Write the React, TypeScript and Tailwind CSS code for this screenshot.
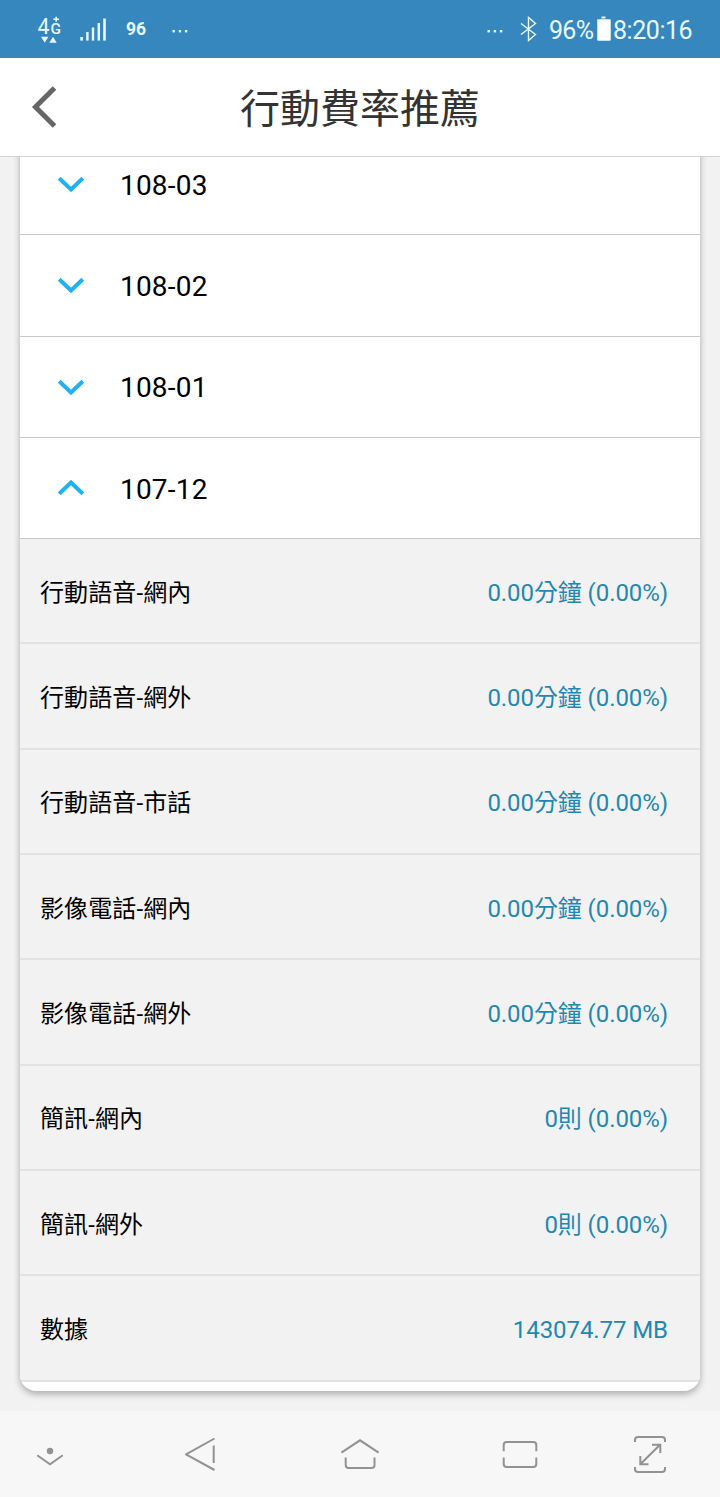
import React from 'react';

const months = [
  { label: '108-03', open: false },
  { label: '108-02', open: false },
  { label: '108-01', open: false },
  { label: '107-12', open: true },
];

const usage = [
  ['行動語音-網內', '0.00分鐘 (0.00%)'],
  ['行動語音-網外', '0.00分鐘 (0.00%)'],
  ['行動語音-市話', '0.00分鐘 (0.00%)'],
  ['影像電話-網內', '0.00分鐘 (0.00%)'],
  ['影像電話-網外', '0.00分鐘 (0.00%)'],
  ['簡訊-網內', '0則 (0.00%)'],
  ['簡訊-網外', '0則 (0.00%)'],
  ['數據', '143074.77 MB'],
];

function Dots() {
  return (
    <svg width="16" height="4" viewBox="0 0 16 4" fill="#e8faff">
      <rect x="0.5" y="1" width="2.4" height="2.4" />
      <rect x="6.7" y="1" width="2.4" height="2.4" />
      <rect x="12.9" y="1" width="2.4" height="2.4" />
    </svg>
  );
}

function NetworkIcon() {
  return (
    <svg width="26" height="30" viewBox="0 0 26 30" fill="#e8faff" className="font-[Roboto,sans-serif]">
      <text x="0.5" y="19.7" fontSize="22" textLength="12" lengthAdjust="spacingAndGlyphs">4</text>
      <text x="13.5" y="19.9" fontSize="15" fontWeight="500" textLength="10.5" lengthAdjust="spacingAndGlyphs">G</text>
      <path d="M19.2 2.7v5M16.4 5.2h5.6" stroke="#e8faff" strokeWidth="1.6" />
      <path d="M4 22.8h7.4l-3.7 6zM12.3 28.8h7.4l-3.7-6z" />
    </svg>
  );
}

function Signal() {
  return (
    <svg width="27" height="23" viewBox="0 0 27 23" fill="#e8faff">
      <rect x="0.3" y="19" width="2.6" height="3.6" />
      <rect x="6.2" y="14" width="2.4" height="8.6" />
      <rect x="11.8" y="9.5" width="2.4" height="13.1" />
      <rect x="17.6" y="5" width="2.4" height="17.6" />
      <rect x="23.2" y="0.5" width="2.6" height="22.1" />
    </svg>
  );
}

function StatusBar() {
  return (
    <div className="flex h-[58px] shrink-0 items-center bg-[#3787bf] pl-[37px] pr-[28px] text-[#e8faff]">
      <NetworkIcon />
      <div className="ml-[17px]"><Signal /></div>
      <span className="ml-[19px] mt-[2px] w-[21px] text-[17.5px] font-bold leading-none">96</span>
      <div className="mt-[3px] ml-[25px] flex"><Dots /></div>
      <div className="ml-auto mt-[3px] flex"><Dots /></div>
      <svg className="ml-[17px]" width="17" height="26" viewBox="0 0 17 26" fill="none" stroke="#e8faff" strokeWidth="1.4">
        <path d="M1 7.5 15.5 18.5 8.5 24.5V1.5L15.5 7.5 1 18.5" />
      </svg>
      <span className="ml-[12px] mt-[3px] w-[45px] whitespace-nowrap text-[25px] leading-none tracking-[-0.7px]">96%</span>
      <svg className="mb-px ml-[2px]" width="16" height="26" viewBox="0 0 16 26">
        <rect x="5.5" y="0.5" width="4" height="2" fill="#e8faff" />
        <rect x="1" y="3" width="14" height="22" rx="1.4" fill="#c5dff0" />
        <rect x="2" y="4" width="12" height="20" fill="#fff" />
      </svg>
      <span className="ml-px mt-[3px] w-[79px] whitespace-nowrap text-[25px] leading-none tracking-[-0.45px]">8:20:16</span>
    </div>
  );
}

function Chevron({ open }: { open: boolean }) {
  return (
    <svg width="30" height="20" viewBox="0 0 30 20" fill="none" stroke="#1eb2f2" strokeWidth="4">
      <path d={open ? 'M3.2 15.7 15 4.5 26.8 15.7' : 'M3.2 4.3 15 15.5 26.8 4.3'} />
    </svg>
  );
}

function NavBar() {
  return (
    <nav className="flex h-[86px] shrink-0 items-center bg-[#f7f7f7] text-[#929292]">
      <div className="flex w-[100px] justify-center">
        <svg width="40" height="40" viewBox="0 0 40 40" fill="none" stroke="currentColor" strokeWidth="2">
          <circle cx="20" cy="17" r="3.2" fill="currentColor" stroke="none" />
          <path d="M7.2 21.2 20 30.2 32.8 21.2" />
        </svg>
      </div>
      <div className="flex w-[200px] justify-center">
        <svg width="40" height="40" viewBox="0 0 40 40" fill="none" stroke="currentColor" strokeWidth="2" strokeLinejoin="round">
          <path d="M34.5 4.5 6 20.3 34.5 36M33.7 11.5V29" />
        </svg>
      </div>
      <div className="flex w-[120px] justify-center">
        <svg width="40" height="40" viewBox="0 0 40 40" fill="none" stroke="currentColor" strokeWidth="2">
          <path d="M1.4 18.7 20 6.3 38.6 18.7M5.7 23.5V31q0 3 3 3h22.8q3 0 3-3v-7.5" />
        </svg>
      </div>
      <div className="flex w-[200px] justify-center">
        <svg width="40" height="40" viewBox="0 0 40 40" fill="none" stroke="currentColor" strokeWidth="2">
          <path d="M3.7 17.3V11q0-3 3-3h26.6q3 0 3 3v6.3M3.7 23.5V30q0 3 3 3h26.6q3 0 3-3v-6.5" />
        </svg>
      </div>
      <div className="flex w-[60px] justify-center">
        <svg width="40" height="40" viewBox="0 0 40 40" fill="none" stroke="currentColor" strokeWidth="2">
          <path d="M5 8V6q0-3 3-3h24q3 0 3 3v2M5 33v2q0 3 3 3h24q3 0 3-3v-2M10.5 30 30 10.7M22 10.7h8.3V19M10.3 22v8.3h8.2" />
        </svg>
      </div>
    </nav>
  );
}

export default function App() {
  return (
    <div className="flex h-[1497px] w-[720px] flex-col overflow-hidden bg-[#f2f2f2] font-[Roboto,'Noto_Sans_CJK_TC',sans-serif]">
      <StatusBar />
      <header className="flex h-[99px] shrink-0 items-center border-b border-[#d4d4d4] bg-white">
        <div className="flex w-[120px] pl-[31px]">
          <svg width="28" height="44" viewBox="0 0 28 44" fill="none" stroke="#666" strokeWidth="5">
            <path d="M23.5 3 4.5 22 23.5 41" />
          </svg>
        </div>
        <h1 className="flex-1 pt-[5px] text-center text-[40px] leading-none text-[#333]">行動費率推薦</h1>
        <div className="w-[120px]" />
      </header>
      <main className="h-[1254px] shrink-0 overflow-hidden px-5">
        <section className="-mt-[23px] h-[1257px] overflow-hidden rounded-b-2xl bg-white shadow-[0_3px_7px_rgba(0,0,0,0.3)]">
          {months.map((month) => (
            <div key={month.label} className="flex h-[101.3px] items-center border-b border-[#c8c8c8] pl-[36px]">
              <Chevron open={month.open} />
              <span className="ml-[34px] pt-[3px] text-[28px] leading-none tracking-[0.2px] text-black">{month.label}</span>
            </div>
          ))}
          {usage.map(([label, value]) => (
            <div key={label} className="flex h-[105.3px] items-center justify-between border-b-2 border-[#e2e2e2] bg-[#f2f2f2] pl-5 pr-[33px] pt-[4px] text-[24px] leading-none">
              <span className="tracking-[0.12px] text-black">{label}</span>
              <span className="-mr-px tracking-[-0.08px] text-[#1f88b1]">{value}</span>
            </div>
          ))}
        </section>
      </main>
      <NavBar />
    </div>
  );
}
